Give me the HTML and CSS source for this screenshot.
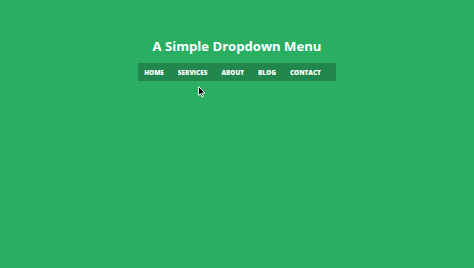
FILE: index.html
```html
<!DOCTYPE html>
<html>
<head>
<meta charset="utf-8">
<link rel="stylesheet" href="styles.css">
</head>
<body>
<div class="page">
  <h1 class="title">A Simple Dropdown Menu</h1>
  <nav class="menu">
    <a class="menu-item" href="#">Home</a>
    <a class="menu-item" href="#">Services</a>
    <a class="menu-item" href="#">About</a>
    <a class="menu-item" href="#">Blog</a>
    <a class="menu-item" href="#">Contact</a>
  </nav>
</div>
<svg class="cursor" width="8" height="12" viewBox="0 0 8 12"><path d="M0.5 0.5 L0.5 9.5 L2.6 7.6 L4 11 L5.4 10.4 L4 7.1 L7 7.1 Z" fill="#000" stroke="#fff" stroke-width="0.9"/></svg>
</body>
</html>
```
FILE: styles.css
```css
html, body {
  margin: 0;
  padding: 0;
  height: 100%;
}
body {
  background: #29ae62;
  font-family: "Open Sans", "Liberation Sans", sans-serif;
  overflow: hidden;
}
.page {
  display: flex;
  flex-direction: column;
  align-items: center;
  padding-top: 36px;
}
.title {
  margin: 0;
  color: #fff;
  font-size: 13.1px;
  font-weight: 700;
  line-height: 20px;
}
.menu {
  margin-top: 7px;
  display: flex;
  background: #22874d;
  height: 18px;
  align-items: center;
  padding: 0 15px 0 6px;
}
.menu-item {
  color: #fff;
  text-decoration: none;
  text-transform: uppercase;
  font-size: 6.4px;
  font-weight: 800;
  margin-right: 14px;
}
.menu-item:last-child {
  margin-right: 0;
}
.cursor {
  position: absolute;
  left: 198px;
  top: 86px;
}
```
